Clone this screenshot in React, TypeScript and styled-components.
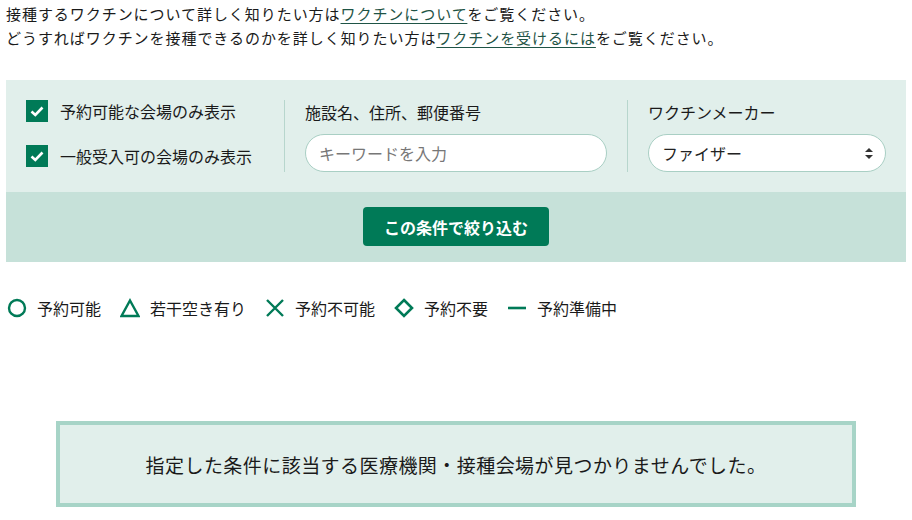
import styled, { createGlobalStyle } from 'styled-components'

const GlobalStyle = createGlobalStyle`
  body {
    margin: 0;
    background: #fff;
    color: #1a1a1a;
    font-family: "Noto Sans CJK JP", "Noto Sans", sans-serif;
  }
`

const Page = styled.div`
  padding: 2px 6px 0;
`

const Intro = styled.p`
  margin: 0;
  font-size: 15px;
  line-height: 24px;
  letter-spacing: 0.95px;
`

const Link = styled.a`
  color: #1f5446;
  text-decoration: underline;
  text-underline-offset: 3px;
`

const Panel = styled.section`
  margin-top: 30px;
  background: #e1efeb;
`

const Filters = styled.div`
  display: flex;
  padding: 20px;
`

const CheckColumn = styled.div`
  width: 258px;
  flex: none;
  display: flex;
  flex-direction: column;
  gap: 21px;
  margin-top: -1px;
`

const Field = styled.div<{ $width?: number }>`
  box-sizing: border-box;
  border-left: 1px solid #b7d6cd;
  padding: 0 20px;
  ${(p) => (p.$width ? `width: ${p.$width}px; flex: none;` : 'flex: 1; padding-right: 0;')}
`

const CheckRow = styled.label`
  display: flex;
  align-items: center;
  gap: 12px;
  font-size: 16px;
  line-height: 24px;
`

const Box = styled.span`
  width: 22px;
  height: 22px;
  background: #007a57;
  display: flex;
  align-items: center;
  justify-content: center;
`

const FieldLabel = styled.div`
  font-size: 16px;
  line-height: 24px;
  margin-bottom: 10px;
`

const Input = styled.div`
  height: 38px;
  box-sizing: border-box;
  border: 1px solid #a9cfc4;
  border-radius: 19px;
  background: #fff;
  display: flex;
  align-items: center;
  justify-content: space-between;
  padding: 0 12px 0 13px;
  font-size: 16px;
  color: #777;
`

const SelectText = styled.span`
  color: #222;
`

const Actions = styled.div`
  background: #c6e1d9;
  padding: 15px 0 16px;
  display: flex;
  justify-content: center;
`

const Button = styled.button`
  width: 186px;
  height: 39px;
  border: none;
  border-radius: 4px;
  background: #007a57;
  color: #fff;
  font-family: inherit;
  font-size: 16px;
  font-weight: 700;
`

const Legend = styled.ul`
  list-style: none;
  margin: 34px 0 0;
  padding: 0 0 0 1px;
  display: flex;
  gap: 19px;
`

const LegendItem = styled.li`
  display: flex;
  align-items: center;
  gap: 10px;
  font-size: 16px;
  line-height: 24px;
`

const Message = styled.div`
  width: 800px;
  box-sizing: border-box;
  margin: 101px auto 0;
  border: 4px solid #a7d4c7;
  background: #e1efeb;
  height: 86px;
  display: flex;
  align-items: center;
  justify-content: center;
  font-size: 19px;
  letter-spacing: 0.45px;
`

const green = '#007a57'

const Check = () => (
  <svg width="16" height="16" viewBox="0 0 16 16">
    <path d="M2.5 8.5 L6.3 12 L13.5 4.5" fill="none" stroke="#fff" strokeWidth="2.6" />
  </svg>
)

const icons: Record<string, JSX.Element> = {
  circle: <circle cx="10" cy="10" r="8" fill="none" stroke={green} strokeWidth="2.4" />,
  triangle: <path d="M10 2.5 L18.5 18 L1.5 18 Z" fill="none" stroke={green} strokeWidth="2.4" strokeLinejoin="miter" />,
  cross: <path d="M2 2 L18 18 M18 2 L2 18" fill="none" stroke={green} strokeWidth="2.4" />,
  diamond: <path d="M10 2 L18 10 L10 18 L2 10 Z" fill="none" stroke={green} strokeWidth="2.6" />,
  dash: <path d="M1 10 L19 10" stroke={green} strokeWidth="2.6" />,
}

const legend = [
  ['circle', '予約可能'],
  ['triangle', '若干空き有り'],
  ['cross', '予約不可能'],
  ['diamond', '予約不要'],
  ['dash', '予約準備中'],
]

export default function App() {
  return (
    <Page>
      <GlobalStyle />
      <Intro>
        接種するワクチンについて詳しく知りたい方は<Link>ワクチンについて</Link>をご覧ください。
        <br />
        どうすればワクチンを接種できるのかを詳しく知りたい方は<Link>ワクチンを受けるには</Link>をご覧ください。
      </Intro>

      <Panel>
        <Filters>
          <CheckColumn>
            <CheckRow>
              <Box><Check /></Box>予約可能な会場のみ表示
            </CheckRow>
            <CheckRow>
              <Box><Check /></Box>一般受入可の会場のみ表示
            </CheckRow>
          </CheckColumn>
          <Field $width={343}>
            <FieldLabel>施設名、住所、郵便番号</FieldLabel>
            <Input>キーワードを入力</Input>
          </Field>
          <Field>
            <FieldLabel>ワクチンメーカー</FieldLabel>
            <Input>
              <SelectText>ファイザー</SelectText>
              <svg width="8" height="11" viewBox="0 0 8 11">
                <path d="M4 0 L8 4 L0 4 Z M0 7 L8 7 L4 11 Z" fill="#333" />
              </svg>
            </Input>
          </Field>
        </Filters>
        <Actions>
          <Button>この条件で絞り込む</Button>
        </Actions>
      </Panel>

      <Legend>
        {legend.map(([icon, label]) => (
          <LegendItem key={label}>
            <svg width="20" height="20" viewBox="0 0 20 20">{icons[icon]}</svg>
            {label}
          </LegendItem>
        ))}
      </Legend>

      <Message>指定した条件に該当する医療機関・接種会場が見つかりませんでした。</Message>
    </Page>
  )
}
